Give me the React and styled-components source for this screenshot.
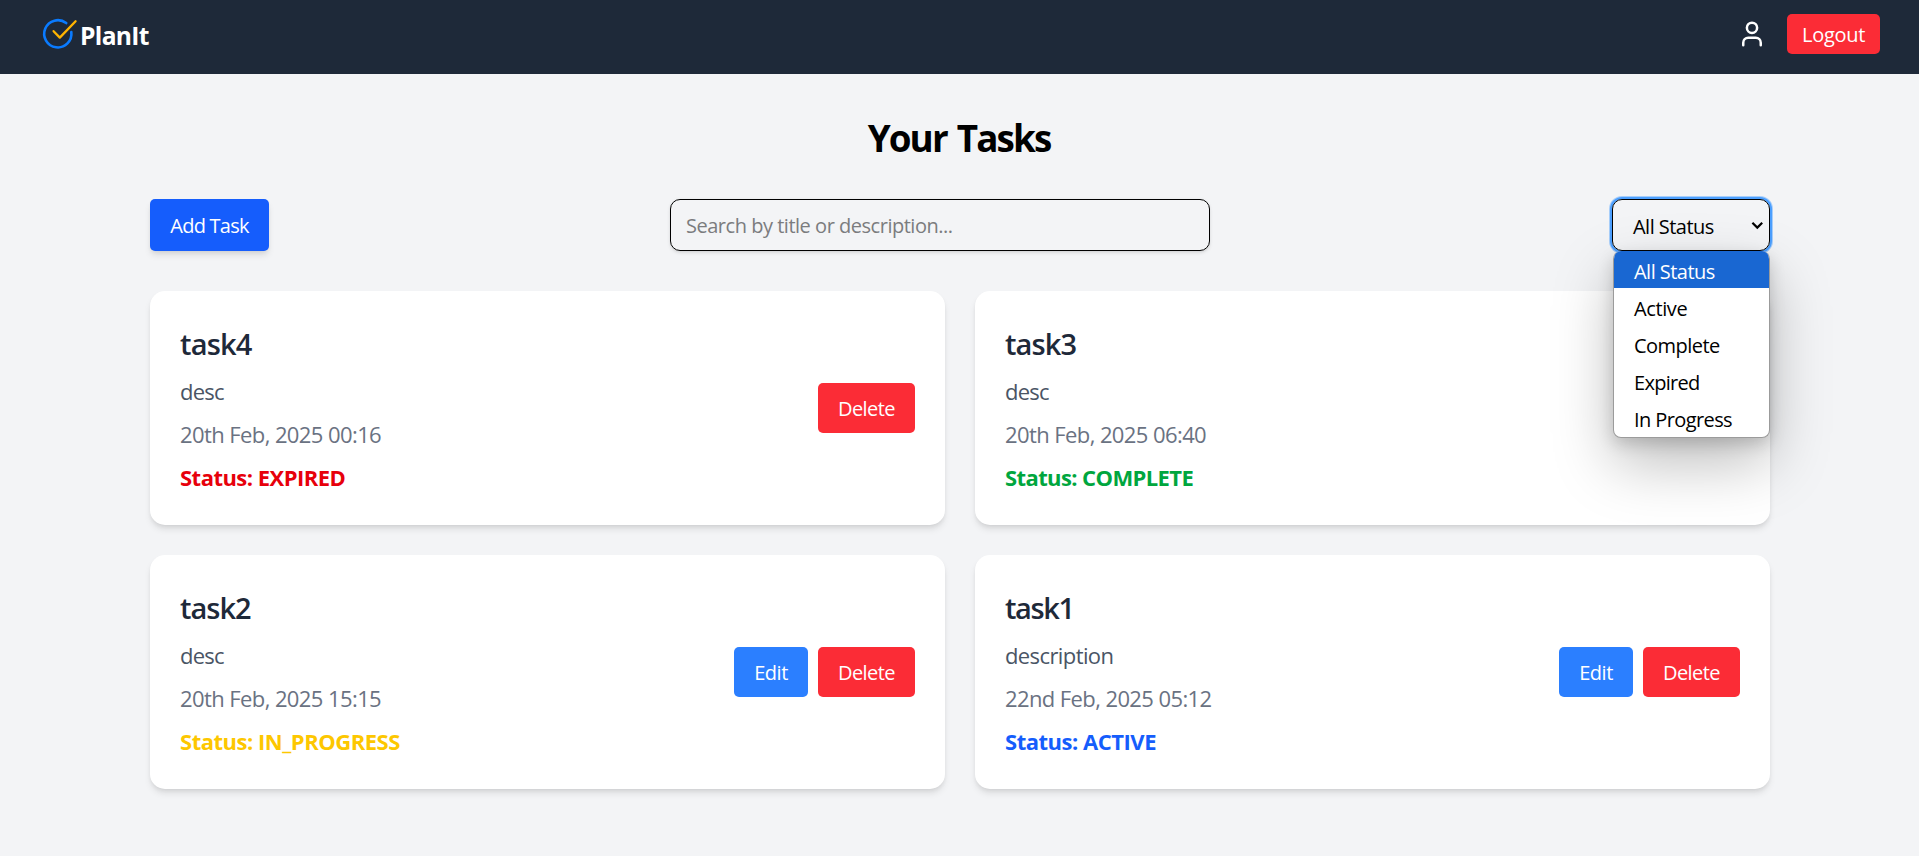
import React from "react";
import styled, { createGlobalStyle } from "styled-components";

const GlobalStyle = createGlobalStyle`
  *, *::before, *::after { box-sizing: border-box; }
  body {
    margin: 0;
    background: #f3f4f6;
    color: #000;
    font-family: "Open Sans", "Noto Sans", sans-serif;
    font-size: 20px;
  }
  h1, h2, p, ul { margin: 0; padding: 0; }
  button, input { font: inherit; }
`;

const Page = styled.div`
  min-height: 856px;
  background: #f3f4f6;
`;

const Header = styled.header`
  display: flex;
  justify-content: space-between;
  align-items: flex-start;
  height: 74px;
  padding: 14px 39px 0 41px;
  background: #1e2939;
  color: #fff;
`;

const Brand = styled.div`
  display: flex;
  gap: 2px;
  height: 44px;
  svg { display: block; }
`;

const BrandName = styled.span`
  margin-top: 4px;
  font-size: 24.6px;
  font-weight: 700;
  line-height: 35px;
  letter-spacing: -0.66px;
`;

const HeaderActions = styled.div`
  display: flex;
  align-items: center;
  gap: 20px;
  svg { display: block; }
`;

const Button = styled.button`
  display: inline-flex;
  align-items: center;
  justify-content: center;
  width: ${(p) => p.$width}px;
  height: ${(p) => p.$height || 50}px;
  padding: 0;
  border: 0;
  border-radius: 5px;
  background: ${(p) => p.$color};
  color: #fff;
  letter-spacing: ${(p) => p.$track}px;
  white-space: nowrap;
  box-shadow: ${(p) =>
    p.$raised
      ? "0 5px 7.5px -1.25px rgba(0,0,0,.1), 0 2.5px 5px -2.5px rgba(0,0,0,.1)"
      : "none"};
`;

const Main = styled.main`
  width: 1620px;
  margin: 0 auto 0 150px;
  padding-top: 42px;
`;

const Title = styled.h1`
  height: 45px;
  padding-right: 2px;
  font-size: 36.8px;
  font-weight: 700;
  line-height: 45px;
  letter-spacing: -1.9px;
  word-spacing: 2.5px;
  text-align: center;
`;

const Toolbar = styled.div`
  display: flex;
  justify-content: space-between;
  align-items: center;
  height: 52px;
  margin: 38px 0 40px;
`;

const Search = styled.input`
  width: 540px;
  height: 52px;
  margin-left: -1px;
  padding: 0 15px;
  border: 1px solid #000;
  border-radius: 10px;
  background: transparent;
  letter-spacing: -0.48px;
  box-shadow: 0 1.25px 3.75px rgba(0, 0, 0, 0.1), 0 1.25px 2.5px -1.25px rgba(0, 0, 0, 0.1);
  &::placeholder { color: #7b7c7e; opacity: 1; }
`;

const StatusFilter = styled.div`
  position: relative;
  width: 158px;
  height: 52px;
`;

const Selected = styled.div`
  display: flex;
  align-items: center;
  justify-content: space-between;
  height: 52px;
  padding: 2px 5px 0 20px;
  border: 1px solid #000;
  border-radius: 10px;
  box-shadow: 0 0 0 2px #4c9ffe, 0 0 0 3px rgba(76, 159, 254, 0.45);
  letter-spacing: -0.53px;
  svg { display: block; margin-bottom: 1px; }
`;

const Options = styled.ul`
  position: absolute;
  top: 52px;
  left: 1px;
  z-index: 2;
  width: 157px;
  height: 187px;
  overflow: hidden;
  list-style: none;
  border: 1px solid #9b9b9b;
  border-top: 0;
  border-radius: 8px;
  background: #fff;
  box-shadow: 0 25px 60px rgba(0, 0, 0, 0.26), 0 6px 16px rgba(0, 0, 0, 0.16);
`;

const Option = styled.li`
  height: 37px;
  padding: 7px 0 0 20px;
  line-height: 27px;
  letter-spacing: ${(p) => p.$track}px;
  background: ${(p) => (p.$active ? "#1967d2" : "transparent")};
  color: ${(p) => (p.$active ? "#fff" : "#000")};
`;

const TaskGrid = styled.section`
  display: grid;
  grid-template-columns: 1fr 1fr;
  gap: 30px;
`;

const Card = styled.article`
  display: flex;
  justify-content: space-between;
  align-items: center;
  height: 234px;
  padding: 30px;
  border-radius: 15px;
  background: #fff;
  box-shadow: 0 5px 7.5px -1.25px rgba(0, 0, 0, 0.1), 0 2.5px 5px -2.5px rgba(0, 0, 0, 0.1);
`;

const Details = styled.div`
  display: flex;
  flex-direction: column;
  align-self: flex-start;
`;

const TaskTitle = styled.h2`
  margin-bottom: 10px;
  color: #1e2939;
  font-size: 29px;
  font-weight: 600;
  line-height: 45px;
  letter-spacing: ${(p) => p.$track}px;
`;

const Line = styled.p`
  height: 43px;
  color: ${(p) => p.$color};
  font-size: 22px;
  font-weight: ${(p) => (p.$bold ? 700 : 400)};
  line-height: 30px;
  letter-spacing: ${(p) => p.$track}px;
  white-space: nowrap;
`;

const Actions = styled.div`
  display: flex;
  gap: 10px;
`;

const options = [
  { label: "All Status", track: -0.53, active: true },
  { label: "Active", track: -0.4 },
  { label: "Complete", track: -0.54 },
  { label: "Expired", track: -0.7 },
  { label: "In Progress", track: -0.6 },
];

const tasks = [
  { title: "task4", desc: "desc", date: "20th Feb, 2025 00:16", status: "EXPIRED", color: "#e7000b", track: [-0.8, -0.8, -0.59, -0.52], deletable: true },
  { title: "task3", desc: "desc", date: "20th Feb, 2025 06:40", status: "COMPLETE", color: "#00a63e", track: [-0.9, -0.8, -0.59, -0.6] },
  { title: "task2", desc: "desc", date: "20th Feb, 2025 15:15", status: "IN_PROGRESS", color: "#fdc700", track: [-1, -0.8, -0.59, -0.48], editable: true, deletable: true },
  { title: "task1", desc: "description", date: "22nd Feb, 2025 05:12", status: "ACTIVE", color: "#155dfc", track: [-1.4, -0.6, -0.6, -0.48], editable: true, deletable: true },
];

const LogoMark = () => (
  <svg width="37" height="38" viewBox="0 0 37 38" fill="none" strokeLinecap="round" strokeLinejoin="round">
    <path d="M25.2 9.1A13.6 13.6 0 1 0 30.3 18" stroke="#0a7bff" strokeWidth="2.6" />
    <path d="M12.6 17.2L18.8 23.6L34.6 7.3" stroke="#ffb400" strokeWidth="2.3" />
  </svg>
);

const UserIcon = () => (
  <svg width="30" height="30" viewBox="0 0 24 24" fill="none" stroke="#fff" strokeWidth="2" strokeLinecap="round" strokeLinejoin="round">
    <path d="M19 21v-2a4 4 0 0 0-4-4H9a4 4 0 0 0-4 4v2" />
    <circle cx="12" cy="7" r="4.1" />
  </svg>
);

const Chevron = () => (
  <svg width="13" height="9" viewBox="0 0 13 9" fill="none" stroke="#000" strokeWidth="2.2">
    <path d="M1.4 1.7L6.3 6.6L11.2 1.7" />
  </svg>
);

export default function App() {
  return (
    <Page>
      <GlobalStyle />
      <Header>
        <Brand>
          <LogoMark />
          <BrandName>PlanIt</BrandName>
        </Brand>
        <HeaderActions>
          <UserIcon />
          <Button $color="#fb2c36" $width={93} $height={40} $track={-0.3}>Logout</Button>
        </HeaderActions>
      </Header>
      <Main>
        <Title>Your Tasks</Title>
        <Toolbar>
          <Button $color="#155dfc" $width={119} $height={52} $track={-0.75} $raised>Add Task</Button>
          <Search placeholder="Search by title or description..." />
          <StatusFilter>
            <Selected>
              All Status
              <Chevron />
            </Selected>
            <Options>
              {options.map((o) => (
                <Option key={o.label} $active={o.active} $track={o.track}>{o.label}</Option>
              ))}
            </Options>
          </StatusFilter>
        </Toolbar>
        <TaskGrid>
          {tasks.map((t) => (
            <Card key={t.title}>
              <Details>
                <TaskTitle $track={t.track[0]}>{t.title}</TaskTitle>
                <Line $color="#4a5565" $track={t.track[1]}>{t.desc}</Line>
                <Line $color="#6a7282" $track={t.track[2]}>{t.date}</Line>
                <Line $color={t.color} $track={t.track[3]} $bold>Status: {t.status}</Line>
              </Details>
              <Actions>
                {t.editable && <Button $color="#2b7fff" $width={74} $track={-0.45}>Edit</Button>}
                {t.deletable && <Button $color="#fb2c36" $width={97} $track={-0.55}>Delete</Button>}
              </Actions>
            </Card>
          ))}
        </TaskGrid>
      </Main>
    </Page>
  );
}
